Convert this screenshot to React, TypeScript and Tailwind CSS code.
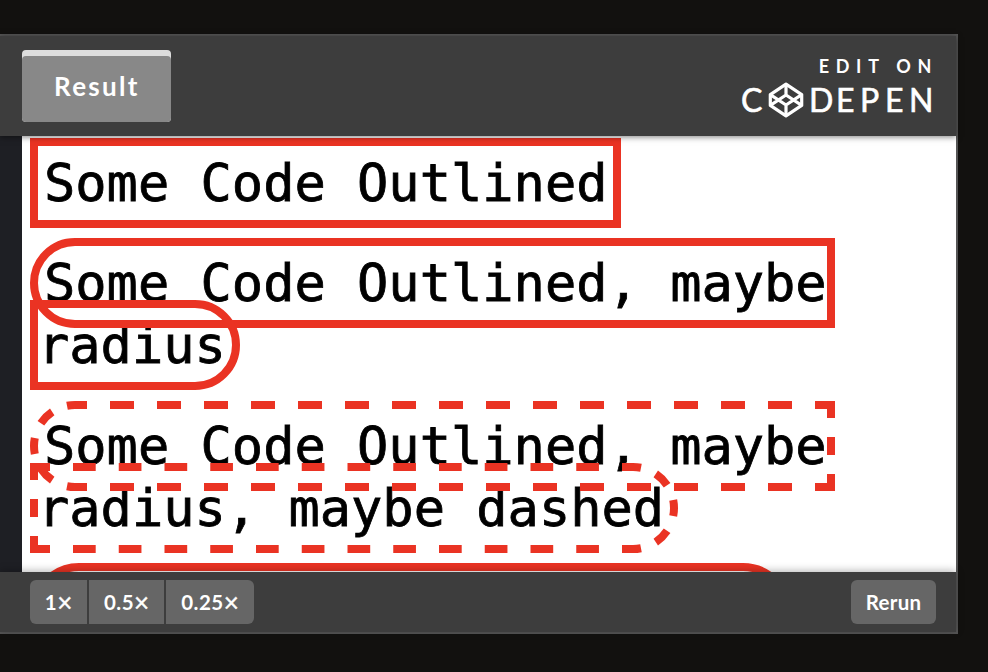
import React from 'react'

const RED = '#ea3323'

function CodePenMark() {
  return (
    <svg className="block h-[36px] w-[36px] shrink-0" viewBox="0 0 36 36" fill="none" stroke="#fff" strokeWidth="3.2" strokeLinejoin="round">
      <path d="M18 2.2 33.7 12.6V23.4L18 33.8 2.3 23.4V12.6Z" />
      <path d="M18 2.2V13M18 33.8V23M2.3 12.6 18 23 33.7 12.6M2.3 23.4 18 13 33.7 23.4" />
    </svg>
  )
}

/* Dashed frames; curved ends step through 22.5 degree dashes. */
function DashedFrames() {
  return (
    <svg className="pointer-events-none absolute left-0 top-0" width="934" height="436" viewBox="22 136 934 436" fill="none" stroke={RED} strokeWidth="8">
      <path d="M75 405H835" strokeDasharray="12 23 24 23 24 23 24 23 24 23 24 23 24 23 24 23 24 23 24 23 24 23 24 23 24 23 24 23 24 23 24 23 20 0" />
      <path d="M75 487H835" strokeDasharray="12 23 24 23 24 23 24 23 24 23 24 23 24 23 24 23 24 23 24 23 24 23 24 23 24 23 24 23 24 23 24 23 20 0" />
      <path d="M831 401V418M831 437V455M831 474V491" />
      <path d="M75 405A41 41 0 0 0 75 487" pathLength="180" strokeDasharray="11.25 22.5 22.5 22.5 22.5 22.5 22.5 22.5 11.25 0" />
      <path d="M30 467H50M73 467H633" strokeDasharray="22.7 23.05" />
      <path d="M30 549H50M73 549H633" strokeDasharray="22.7 23.05" />
      <path d="M34 463V480M34 499V517M34 536V553" />
      <path d="M633 467A41 41 0 0 1 633 549" pathLength="180" strokeDasharray="11.25 22.5 22.5 22.5 22.5 22.5 22.5 22.5 11.25 0" />
    </svg>
  )
}

function Zoom({ value, className }: { value: string; className: string }) {
  return (
    <div className={`flex h-[44px] justify-center bg-[#666] ${className}`}>
      <span className="tracking-[0.5px]">{value}</span>
      <span className="text-[26px] font-normal leading-[45px] [-webkit-text-stroke:0.4px_white]">×</span>
    </div>
  )
}

export default function App() {
  const line = 'h-[74px] whitespace-pre leading-[74px]'
  const ring = 'outline-8 outline-solid outline-[#ea3323]'
  return (
    <div className="h-[672px] w-[988px] overflow-hidden bg-[#12110f] pt-[34px] font-['Lato',sans-serif] text-white">
      <div className="flex h-[600px] w-[958px] flex-col border-y-2 border-r-2 border-[#555] bg-[#1e1f24]">
        <header className="relative z-10 flex h-[100px] shrink-0 items-start justify-between bg-[#3d3d3d] pl-[22px] pr-[24px] shadow-[0_1px_6px_rgba(0,0,0,0.5)]">
          <div className="mt-[14px] h-[72px] w-[149px] rounded bg-[#ddd] pt-[6px]">
            <div className="h-[66px] rounded bg-[#888] pl-[32px] text-[26px] font-bold leading-[61px] tracking-[2.3px]">Result</div>
          </div>
          <div className="flex flex-col items-end pt-[20px]">
            <div className="mr-[-6px] text-[18px] font-bold leading-[20px] tracking-[6.7px]">EDIT ON</div>
            <div className="mt-[6px] flex h-[36px] items-center text-[32px] leading-[34px]">
              <span className="w-[27px] [-webkit-text-stroke:0.6px_white]">C</span>
              <CodePenMark />
              <span className="flex w-[128px] pl-[5px] [-webkit-text-stroke:0.6px_white]">
                <span className="w-[27px] shrink-0">D</span>
                <span className="w-[24px] shrink-0">E</span>
                <span className="w-[25px] shrink-0">P</span>
                <span className="w-[24px] shrink-0">E</span>
                <span className="w-[25px] shrink-0">N</span>
              </span>
            </div>
          </div>
        </header>

        <main className="relative ml-[22px] h-[436px] overflow-hidden bg-white pl-[16px] pt-[10px] font-['DejaVu_Sans_Mono',monospace] text-[52px] text-black [-webkit-text-stroke:0.8px_black]">
          <div>
            <div className={`${line} ${ring} w-[575px] pl-[6px]`}>Some Code Outlined</div>
            <div className={`${line} ${ring} mt-[26px] w-[789px] rounded-l-[37px] pl-[6px]`}>Some Code Outlined, maybe</div>
            <div className={`${line} ${ring} mt-[-12px] w-[194px] rounded-r-[37px]`}>radius</div>
            <div className={`${line} mt-[27px] pl-[6px]`}>Some Code Outlined, maybe</div>
            <div className={`${line} mt-[-12px]`}>radius, maybe dashed</div>
            <div className="mt-[18px] ml-[-8px] h-[98px] w-[762px] rounded-[49px] border-8 border-[#ea3323]" />
          </div>
          <DashedFrames />
        </main>

        <footer className="relative z-10 flex h-[60px] shrink-0 items-start justify-between bg-[#3d3d3d] pl-[30px] pr-[20px] pt-[8px] text-[20.5px] font-bold leading-[45px] shadow-[0_-1px_8px_rgba(0,0,0,0.3)]">
          <div className="flex gap-[2px]">
            <Zoom value="1" className="w-[57px] rounded-l-md" />
            <Zoom value="0.5" className="w-[75px]" />
            <Zoom value="0.25" className="w-[88px] rounded-r-md" />
          </div>
          <div className="h-[44px] w-[85px] rounded-md bg-[#666] text-center tracking-[0.3px]">Rerun</div>
        </footer>
      </div>
    </div>
  )
}
